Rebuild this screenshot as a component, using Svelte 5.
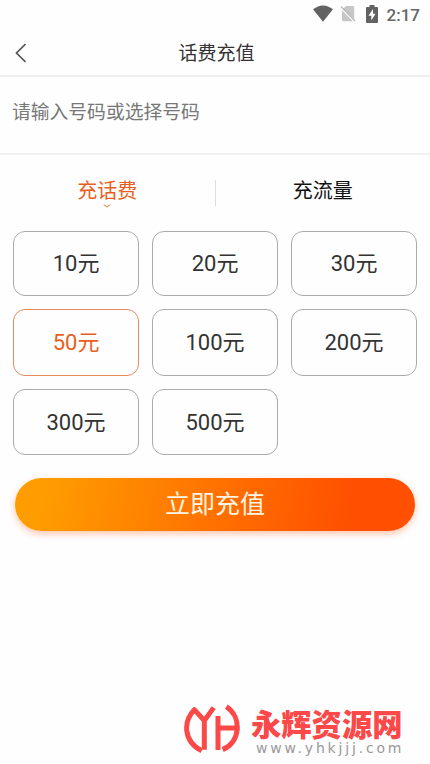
<script>
  const amounts = [10, 20, 30, 50, 100, 200, 300, 500];
  let selected = $state(50);
  let tab = $state(0);
</script>

<div class="screen">
  <div class="status">
    <svg class="wifi" width="22" height="18" viewBox="0 0 22 18"><path d="M1 4.2Q11-3.4 21 4.2L11 16.8Z" fill="#626262" /></svg>
    <svg class="sim" width="16" height="18" viewBox="0 0 16 18"><path d="M6 1h7q1.200 0 1.200 1.200V14L3 3.700ZM2 5.200L12.800 16.300H3.200Q2 16.300 2 15.200Z" fill="#c6c6c6" /><path d="M1 1.500L15 16" stroke="#b5b5b5" stroke-width="1.200" /></svg>
    <svg class="battery" width="12" height="18" viewBox="0 0 12 18"><path d="M3.500 0h5v2H11q1 0 1 1v14q0 1-1 1H1q-1 0-1-1V3q0-1 1-1h2.500Z" fill="#626262" /><path d="M7 4L2.500 10.700H5.300V15.500L9.500 8.800H7Z" fill="#fff" /></svg>
    <span>2:17</span>
  </div>
  <header>
    <svg width="12" height="20" viewBox="0 0 12 20"><path d="M11.500 1L2.500 10L11.500 19" fill="none" stroke="#555" stroke-width="1.700" /></svg>
    <h1>话费充值</h1>
  </header>
  <div class="phone">请输入号码或选择号码</div>
  <nav>
    <button class:active={tab === 0} onclick={() => (tab = 0)}>
      充话费
      <svg width="8" height="4" viewBox="0 0 8 4"><path d="M.7.600L4 3L7.300.600" fill="none" stroke="#ef7034" /></svg>
    </button>
    <i></i>
    <button class:active={tab === 1} onclick={() => (tab = 1)}>充流量</button>
  </nav>
  <div class="grid">
    {#each amounts as amount}
      <button class:active={amount === selected} onclick={() => (selected = amount)}>{amount}元</button>
    {/each}
  </div>
  <button class="submit">立即充值</button>
  <footer>
    <svg width="56" height="50" viewBox="27 26 168 150" fill="none" stroke="#fb4848" stroke-width="15" stroke-linejoin="round">
      <path d="M80 166C26 140 23 79 58 43L88 76L116 37M88 74V163" />
      <path d="M129 62V164M129 98H184" />
      <path d="M154 34C202 66 197 140 143 163" />
    </svg>
    <div class="brand">
      <strong>永辉资源网</strong>
      <small>www.yhkjjj.com</small>
    </div>
  </footer>
</div>

<style>
  :global(body) { margin: 0; background: #fff; }
  .screen { width: 430px; height: 764px; overflow: hidden; display: flex; flex-direction: column; background: #fefefe; font-family: Roboto, "Noto Sans CJK SC", sans-serif; color: #333; }
  button { font: inherit; color: inherit; background: none; border: 0; padding: 0; margin: 0; }
  svg { display: block; flex: none; }
  .status { height: 30px; flex: none; box-sizing: border-box; padding: 5px 10px 0 0; display: flex; align-items: flex-start; justify-content: flex-end; }
  .wifi { margin-right: 6px; }
  .sim { margin-right: 10px; }
  .battery { margin-right: 9px; }
  .status span { font-size: 17px; line-height: 20px; font-weight: 500; color: #666; }
  header { height: 45px; flex: none; display: flex; align-items: center; padding: 0 14px; border-bottom: 2px solid #eee; }
  h1 { flex: 1; margin: 2px 9px 0 0; text-align: center; font-size: 19px; line-height: 28px; font-weight: 400; }
  .phone { height: 78px; flex: none; box-sizing: border-box; padding: 22px 12px 0; border-bottom: 2px solid #f1f1f1; font-size: 18.800px; line-height: 28px; color: #777; }
  nav { height: 76px; flex: none; display: flex; color: #111; font-size: 20px; line-height: 30px; }
  nav button { flex: 1; display: flex; flex-direction: column; align-items: center; padding-top: 21px; }
  nav button svg { margin-top: -2px; }
  nav i { width: 1px; height: 26px; margin-top: 25px; background: #ddd; }
  nav .active { color: #e95e20; }
  .grid { flex: none; display: grid; grid-template-columns: repeat(3, 125.500px); grid-template-rows: 65px 67px 66px; gap: 13px 13.500px; padding: 0 13px 0 13.300px; }
  .grid button { border: 1px solid #aaa; border-radius: 12px; font-size: 22px; line-height: 30px; padding-top: 1px; }
  .grid .active { border-color: #e78a60; color: #e95e20; }
  .submit { flex: none; width: 400px; height: 53px; margin: 23px 15px 0; border-radius: 27px; background: linear-gradient(100deg, #ff9c00 8%, #ff4f00 84%); box-shadow: 0 3px 7px #ff500052; color: #fff4e2; font-size: 25px; line-height: 36px; padding-top: 1px; }
  footer { display: flex; margin: auto 0 8px 184px; }
  .brand { display: flex; flex-direction: column; margin-left: 11px; padding-top: 2px; }
  strong { font-family: "Noto Sans CJK SC", sans-serif; font-size: 30.300px; line-height: 34px; font-weight: 900; color: #fb4848; white-space: nowrap; }
  small { font-family: "DejaVu Sans", sans-serif; font-size: 14px; line-height: 16px; margin: 0 0 0 5px; letter-spacing: 2.820px; color: #999; white-space: nowrap; }
</style>
